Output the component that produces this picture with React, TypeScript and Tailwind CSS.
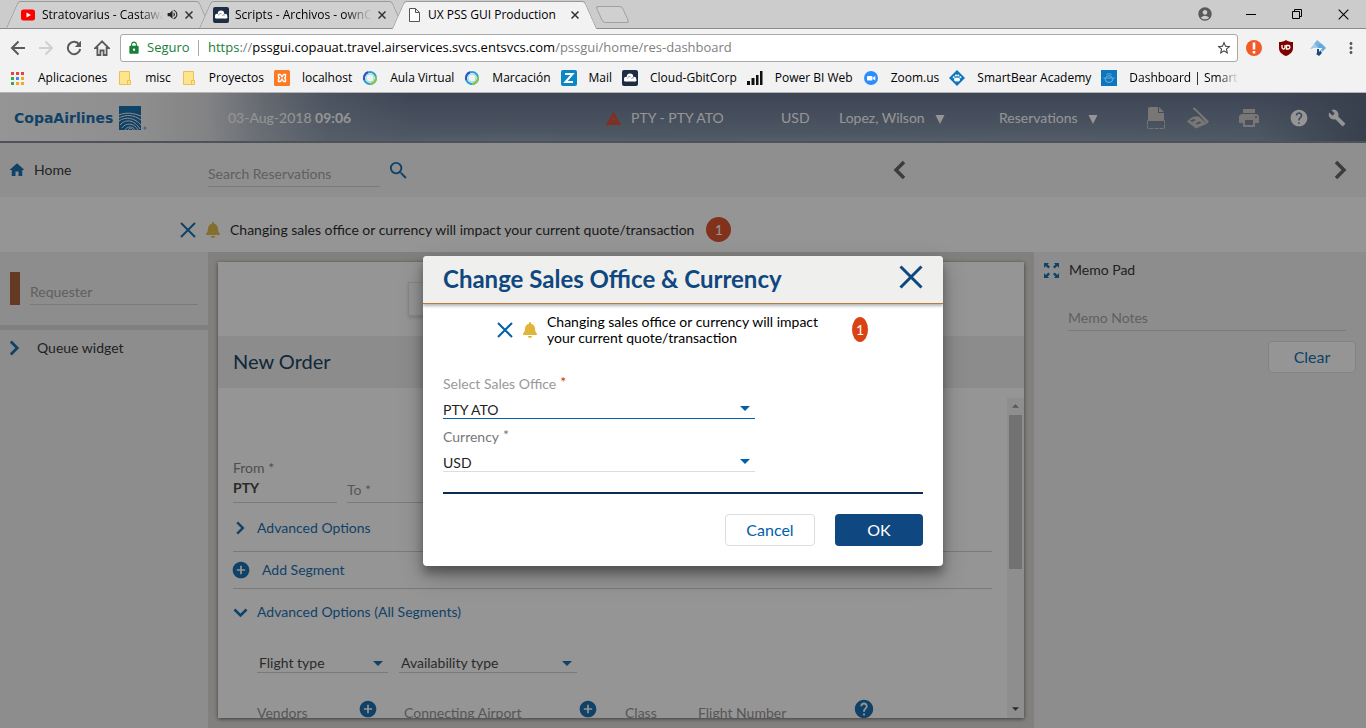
import type { ReactNode } from "react";
import { FaBell } from "react-icons/fa";
import {
  MdAccountCircle,
  MdAddCircle,
  MdBuild,
  MdHelp,
  MdHome,
  MdLock,
  MdMoreVert,
  MdPrint,
  MdSearch,
  MdStarBorder,
  MdVolumeUp,
  MdWarning,
} from "react-icons/md";

/* ---------- shared glyphs ---------- */

function Cross({ className, w = 2 }: { className: string; w?: number }) {
  return (
    <svg viewBox="0 0 16 16" className={className} fill="none" stroke="currentColor" strokeWidth={w} aria-hidden="true">
      <path d="M1 1L15 15M15 1L1 15" />
    </svg>
  );
}

function Chevron({ className, dir }: { className: string; dir: "left" | "right" | "down" }) {
  const d = { left: "M14 2L6 10L14 18", right: "M6 2L14 10L6 18", down: "M2 6L10 14L18 6" }[dir];
  return (
    <svg viewBox="0 0 20 20" className={className} fill="none" stroke="currentColor" strokeWidth="3.5" aria-hidden="true">
      <path d={d} />
    </svg>
  );
}

function Caret({ className }: { className: string }) {
  return (
    <svg viewBox="0 0 10 5" className={className} fill="currentColor" aria-hidden="true">
      <path d="M0 0H10L5 5Z" />
    </svg>
  );
}

function MenuTriangle() {
  return (
    <svg viewBox="0 0 10 9" className="mt-[2px] h-[9px] w-[10px]" fill="currentColor" aria-hidden="true">
      <path d="M.500 0H9.500L5 9Z" />
    </svg>
  );
}

function CloudLogo() {
  return (
    <svg viewBox="0 0 16 16" className="size-4 shrink-0" aria-hidden="true">
      <rect width="16" height="16" rx="2" fill="#1d2d44" />
      <g fill="#fff">
        <circle cx="8" cy="6.8" r="3.2" />
        <circle cx="4.2" cy="9" r="2.3" />
        <circle cx="12" cy="9" r="2.3" />
        <rect x="2" y="9" width="12.4" height="2.4" rx="1.2" />
      </g>
      <path d="M5.5 8.5a2 2 0 0 1 3-1.6M9.5 9a1.6 1.6 0 0 1 2.4-1" fill="none" stroke="#1d2d44" strokeWidth=".5" />
    </svg>
  );
}

/* ---------- browser frame ---------- */

function Tab({ icon, title, audio, active }: { icon: ReactNode; title: string; audio?: boolean; active?: boolean }) {
  const skin = active
    ? "z-10 h-7 before:bg-[#f2f2f2] after:bg-[#f2f2f2] -mb-px"
    : "h-[27px] before:bg-[#d0d0d0] after:bg-[#d0d0d0]";
  return (
    <div
      className={`relative -mr-3 w-[205px] before:absolute before:inset-y-0 before:left-[6px] before:right-1/2 before:-skew-x-[24deg] before:rounded-tl-[3px] before:border-t before:border-l before:border-[#999] after:absolute after:inset-y-0 after:left-1/3 after:right-[6px] after:skew-x-[24deg] after:rounded-tr-[3px] after:border-t after:border-r after:border-[#999] ${skin}`}
    >
      <div className="relative z-10 flex h-full items-center gap-[6px] pr-[18px] pl-[14px]">
        {icon}
        <span
          className={
            active
              ? "flex-1 overflow-hidden text-xs whitespace-nowrap text-black"
              : "flex-1 overflow-hidden text-xs whitespace-nowrap text-black [mask-image:linear-gradient(to_right,#000_80%,transparent)]"
          }
        >
          {title}
        </span>
        {audio && <MdVolumeUp className="-ml-1 size-[13px] shrink-0 text-[#222]" />}
        <button type="button" aria-label="Close tab" className="shrink-0 text-[#333]">
          <Cross className="size-2" w={3} />
        </button>
      </div>
    </div>
  );
}

function TabStrip() {
  return (
    <div className="flex h-[29px] items-end border-b border-[#8c8c8c] bg-[#ccc] pl-[6px]">
      <Tab
        audio
        title="Stratovarius - Castaway"
        icon={
          <svg viewBox="0 0 16 16" className="size-4 shrink-0" aria-hidden="true">
            <rect x="1" y="2.5" width="14" height="11" rx="2.5" fill="#f00" />
            <path d="M6.5 5.5v5L11 8z" fill="#fff" />
          </svg>
        }
      />
      <Tab title="Scripts - Archivos - ownCloud" icon={<CloudLogo />} />
      <Tab
        active
        title="UX PSS GUI Production"
        icon={
          <svg viewBox="0 0 16 16" className="size-4 shrink-0" fill="#fff" stroke="#555" aria-hidden="true">
            <path d="M3.500 1.500h6l4 4v9h-10zM9.500 1.500v4h4" />
          </svg>
        }
      />
      <button
        type="button"
        aria-label="New tab"
        className="mb-[5px] ml-[14px] h-[17px] w-[27px] skew-x-[24deg] rounded-[3px] border border-[#a0a0a0] bg-[#d0d0d0]"
      />
      <div className="mb-[6px] ml-auto flex items-center text-black">
        <button type="button" aria-label="Profile" className="w-[46px] text-[#5a5a5a]">
          <MdAccountCircle className="mx-auto size-4" />
        </button>
        <button type="button" aria-label="Minimize" className="w-[46px]">
          <svg viewBox="0 0 10 10" className="mx-auto size-[10px]" stroke="currentColor">
            <path d="M0 5.500H10" />
          </svg>
        </button>
        <button type="button" aria-label="Restore" className="w-[46px]">
          <svg viewBox="0 0 10 10" className="mx-auto size-[10px]" fill="none" stroke="currentColor">
            <path d="M.5 2.500h7v7h-7zM2.500 2.500v-2h7v7h-2" />
          </svg>
        </button>
        <button type="button" aria-label="Close" className="w-[46px]">
          <Cross className="mx-auto size-[11px]" w={1.6} />
        </button>
      </div>
    </div>
  );
}

function ArrowGlyph({ flip }: { flip?: boolean }) {
  return (
    <svg viewBox="0 0 16 16" className={flip ? "size-4 -scale-x-100 text-[#d0d0d0]" : "size-4 text-[#5a5a5a]"} fill="none" stroke="currentColor" strokeWidth="2">
      <path d="M15 8H2.500M8.500 1.500L2 8L8.500 14.500" />
    </svg>
  );
}

function Toolbar() {
  return (
    <div className="flex h-[34px] items-center bg-[#f2f2f2] pt-[3px] pr-2 pl-[10px]">
      <div className="flex w-[110px] shrink-0 items-center gap-3 text-[#5a5a5a]">
        <button type="button" aria-label="Back"><ArrowGlyph /></button>
        <button type="button" aria-label="Forward"><ArrowGlyph flip /></button>
        <button type="button" aria-label="Reload">
          <svg viewBox="0 0 16 16" className="size-4" fill="none" stroke="currentColor" strokeWidth="2">
            <path d="M13.200 4.500A6.200 6.200 0 1 0 14.200 9" />
            <path d="M15 .800V7H8.800z" fill="currentColor" stroke="none" />
          </svg>
        </button>
        <button type="button" aria-label="Home">
          <svg viewBox="0 0 16 16" className="size-4" fill="none" stroke="currentColor" strokeWidth="1.8">
            <path d="M8 1.300L1.300 8H3.400V15H6.400V10.500H9.600V15H12.600V8H14.700Z" />
          </svg>
        </button>
      </div>
      <div className="flex h-7 flex-1 items-center rounded-[3px] border border-[#a9a9a9] bg-white pr-[5px] pl-[6px]">
        <MdLock className="size-[14px] text-[#188038]" />
        <span className="ml-[6px] w-[51px] text-[13px] text-[#188038]">Seguro</span>
        <span className="mr-[9px] h-4 w-px bg-[#aaa]" />
        <span className="flex-1 text-[13px] text-[#808080]">
          <span className="text-[#188038]">https</span>://<span className="text-black">pssgui.copauat.travel.airservices.svcs.entsvcs.com</span>
          /pssgui/home/res-dashboard
        </span>
        <MdStarBorder className="size-4 text-[#444]" />
      </div>
      <div className="ml-2 flex items-center gap-4">
        <svg viewBox="0 0 16 16" className="size-4" aria-label="Alert extension">
          <circle cx="8" cy="8" r="8" fill="#f15a29" />
          <path d="M6.700 2.500h2.600v7H6.700zM6.700 11h2.600v2.400H6.700z" fill="#fff" />
        </svg>
        <svg viewBox="0 0 16 16" className="size-4" aria-label="Shield extension">
          <path d="M8 0c2 1.400 4.300 2 7 2v6c0 4-3 6.500-7 8C4 14.500 1 12 1 8V2c2.700 0 5-.600 7-2z" fill="#800000" />
          <path d="M4 5v2.500a1.500 1.500 0 0 0 3 0V5M8.500 9V5.500h1.700a1.700 1.700 0 0 1 0 3.500z" fill="none" stroke="#fff" strokeWidth="1.300" />
        </svg>
        <svg viewBox="0 0 16 16" className="size-4" aria-label="Cube extension">
          <path d="M7 0l5 4-4 4-4-4z" fill="#7db5e0" />
          <path d="M0 9l4-5 5 4-3 2V8z" fill="#a3cbea" />
          <path d="M8 4l4 0 4 4-4 4-1-3-3-1z" fill="#62a9dc" />
          <path d="M7 8h2l1 2 2 3-3 3-3-2 1-2z" fill="#134f86" />
          <path d="M3 8.500h9M6.500 9v4.500M9.500 9v2.500" stroke="#f2f2f2" fill="none" />
        </svg>
        <button type="button" aria-label="Menu" className="w-4 text-[#5a5a5a]"><MdMoreVert className="size-[18px]" /></button>
      </div>
    </div>
  );
}

const folder = (
  <svg viewBox="0 0 16 16" className="size-4" aria-hidden="true">
    <path d="M2.500 1.500h10v13h-10z" fill="#fee391" stroke="#e8c44f" />
    <path d="M10.500 10.500h3v4h-3z" fill="#fee391" stroke="#e8c44f" />
  </svg>
);

const ring = (
  <svg viewBox="0 0 16 16" className="size-4" fill="none" strokeWidth="2" aria-hidden="true">
    <circle cx="8" cy="8" r="6" stroke="#2a9fd0" />
    <path d="M8 14A6 6 0 0 0 13.800 6.500" stroke="#8cc63f" />
    <path d="M2.300 10A6 6 0 0 1 6 2.300" stroke="#2b55c9" />
    <circle cx="8" cy="8" r="4" stroke="#9be0d8" strokeWidth="1" />
  </svg>
);

const bookmarks: { label: string; icon: ReactNode }[] = [
  {
    label: "Aplicaciones",
    icon: (
      <svg viewBox="0 0 16 16" className="size-4" aria-hidden="true">
        <path d="M1 2h3v3H1zM6 2h3v3H6zM11 2h3v3h-3z" fill="#ea4335" />
        <path d="M1 7h3v3H1zM1 12h3v3H1z" fill="#34a853" />
        <path d="M6 7h3v3H6z" fill="#4285f4" />
        <path d="M11 7h3v3h-3zM6 12h3v3H6zM11 12h3v3h-3z" fill="#f5a623" />
      </svg>
    ),
  },
  { label: "misc", icon: folder },
  { label: "Proyectos", icon: folder },
  {
    label: "localhost",
    icon: (
      <svg viewBox="0 0 16 16" className="size-4" aria-hidden="true">
        <rect width="16" height="16" rx="1.500" fill="#fb7a24" />
        <path d="M4.500 4.500h2L8 7l1.500-2.500h2V7l-1 1 1 1v2.500h-2L8 9l-1.500 2.500h-2V9l1-1-1-1z" fill="none" stroke="#fff" strokeWidth="1.400" strokeLinejoin="round" />
      </svg>
    ),
  },
  { label: "Aula Virtual", icon: ring },
  { label: "Marcación", icon: ring },
  {
    label: "Mail",
    icon: (
      <svg viewBox="0 0 16 16" className="size-4" aria-hidden="true">
        <rect width="16" height="16" rx="2" fill="#0a87c4" />
        <path d="M4 4h7.500L4.500 12H12" fill="none" stroke="#fff" strokeWidth="2" />
      </svg>
    ),
  },
  { label: "Cloud-GbitCorp", icon: <CloudLogo /> },
  {
    label: "Power BI Web",
    icon: (
      <svg viewBox="0 0 16 16" className="size-4" aria-hidden="true">
        <path d="M0 11h3v4H0zM4.500 8h3v7h-3zM9 5h2.500v10H9zM13 1h2.500v14H13z" fill="#111" />
      </svg>
    ),
  },
  {
    label: "Zoom.us",
    icon: (
      <svg viewBox="0 0 16 16" className="size-4" aria-hidden="true">
        <circle cx="8" cy="8" r="7" fill="#2d8cff" />
        <rect x="4" y="6" width="5.500" height="4.500" rx="1" fill="#fff" />
        <path d="M10 7.500L12.300 6v4.500L10 9z" fill="#fff" />
      </svg>
    ),
  },
  {
    label: "SmartBear Academy",
    icon: (
      <svg viewBox="0 0 16 16" className="size-4" aria-hidden="true">
        <path d="M8 0l8 8-8 8-8-8z" fill="#0d76bd" />
        <ellipse cx="8" cy="9.500" rx="3" ry="2" fill="#fff" />
        <circle cx="4.700" cy="7.300" r="1" fill="#fff" />
        <circle cx="6.900" cy="5.500" r="1.100" fill="#fff" />
        <circle cx="9.300" cy="5.500" r="1.100" fill="#fff" />
        <circle cx="11.400" cy="7.300" r="1" fill="#fff" />
      </svg>
    ),
  },
  {
    label: "Dashboard | SmartBear",
    icon: (
      <svg viewBox="0 0 16 16" className="size-4" aria-hidden="true">
        <path d="M0 0h16v16H0z" fill="#0d76bd" />
        <path d="M2.500 8h11M4 8.500q0 4 4 4t4-4M5 7q3-3 6 0M5.500 5l1-1.500M8 4.500V3M10.500 5l-1-1.500" fill="none" stroke="#7fc0ea" strokeWidth=".8" />
      </svg>
    ),
  },
];

function BookmarksBar() {
  return (
    <nav aria-label="Bookmarks" className="flex h-[30px] items-center gap-[10px] overflow-hidden border-b border-[#b4b4b4] bg-[#f2f2f2] pl-[10px] text-xs text-black">
      {bookmarks.map((b, i) => (
        <a
          key={b.label}
          href="#"
          className={
            i === bookmarks.length - 1
              ? "flex w-[138px] shrink-0 items-center gap-3 overflow-hidden whitespace-nowrap [mask-image:linear-gradient(to_right,#000_85%,transparent)]"
              : "flex shrink-0 items-center gap-3 whitespace-nowrap"
          }
        >
          <span className="shrink-0">{b.icon}</span>
          {b.label}
        </a>
      ))}
    </nav>
  );
}

/* ---------- application ---------- */

function AppHeader() {
  return (
    <header className="flex h-[50px] items-center border-b-2 border-[#77808c] bg-[linear-gradient(to_right,#fff_0%,#f2f2f2_10%,#dcdddf_15%,rgba(190,196,205,0.75)_19%,rgba(150,162,180,0.4)_24%,transparent_30%),radial-gradient(ellipse_at_38%_110%,#8c9fb4_0%,transparent_18%),radial-gradient(ellipse_at_58%_120%,#8c9fb4_0%,transparent_22%),radial-gradient(ellipse_at_76%_110%,#8597ac_0%,transparent_20%),linear-gradient(to_right,transparent_92%,#4d5c76),linear-gradient(to_bottom,#586785,#7a8ca3)] pt-[2px] pr-5 pl-[14px] text-sm text-white">
      <div className="flex w-[214px] shrink-0 items-center text-[#0060a9]">
        <span className="w-[104px] font-['DejaVu_Sans'] text-[14px] font-bold">CopaAirlines</span>
        <svg viewBox="0 0 30 26" className="h-[26px] w-[30px]" aria-label="Copa Airlines globe">
          <path d="M1 1h22v24H1z" fill="currentColor" />
          <g fill="none" stroke="#eee" strokeWidth="1">
            <path d="M1 10c7-3 14-2 22 1M1 13c7-4 15-3 22 2M1 16c7-5 16-3 22 4" />
            <path d="M2 20c5-6 14-6 20 4M4 23c3-5 12-6 16 2M7 25c2-4 8-4 10 0M10 25c1-2 4-2 5 0" />
          </g>
          <circle cx="27" cy="23" r="1.500" fill="#7fa6c6" />
        </svg>
      </div>
      <time className="mr-auto">
        03-Aug-2018 <b>09:06</b>
      </time>
      <div className="flex w-[176px] items-center gap-[9px]">
        <MdWarning className="size-[17px] text-[#da3b20]" />
        PTY - PTY ATO
      </div>
      <span className="w-[58px]">USD</span>
      <button type="button" className="flex w-[160px] items-center gap-[10px]">
        Lopez, Wilson <MenuTriangle />
      </button>
      <button type="button" className="flex w-[148px] items-center gap-[10px]">
        Reservations <MenuTriangle />
      </button>
      <div className="flex items-center gap-7 text-[#c9c6c2]">
        <div className="flex items-center gap-[22px]">
          <svg viewBox="0 0 18 22" className="h-[22px] w-[18px]" fill="currentColor" aria-label="Document">
            <path d="M3 0h8v6h6v8H1V2q0-2 2-2z" />
            <path d="M12 0l5 5h-5z" />
            <path d="M.500 13.500v8h17v-8" fill="none" stroke="currentColor" strokeDasharray="4 1" />
          </svg>
          <svg viewBox="0 0 22 22" className="size-[22px]" fill="currentColor" aria-label="Scanner">
            <path d="M5.500 1.500L7.500 .500L22 14.500 19.500 17C16 11 11 6 5.500 1.500z" />
            <path d="M4 11L7 9.500h5L19.500 17 9 21.500 0 14.500z" />
            <path d="M3 13.500l4-1.500 2 1-4 2zM8.500 16.500l4-2 2 1-4 2z" fill="#6d7d97" />
          </svg>
        </div>
        <MdPrint className="size-6" />
        <div className="flex items-center gap-[19px] text-white">
          <MdHelp className="size-5" />
          <MdBuild className="size-[18px]" />
        </div>
      </div>
    </header>
  );
}

function SearchBar() {
  return (
    <div className="flex h-[54px] items-center bg-[#f3f3f3]">
      <a href="#" className="flex w-[208px] shrink-0 items-center gap-2 pl-2 text-sm text-[#222]">
        <MdHome className="size-[18px] text-[#0060a9]" />
        Home
      </a>
      <input
        aria-label="Search Reservations"
        placeholder="Search Reservations"
        className="mt-[7px] h-[26px] w-[172px] border-b border-[#ccc] text-sm placeholder:text-[#999]"
      />
      <button type="button" aria-label="Search" className="ml-[7px] text-[#0060a9]"><MdSearch className="size-[23px]" /></button>
      <div className="mr-4 ml-auto flex w-[460px] justify-between text-[#555]">
        <button type="button" aria-label="Previous"><Chevron dir="left" className="size-5" /></button>
        <button type="button" aria-label="Next"><Chevron dir="right" className="size-5" /></button>
      </div>
    </div>
  );
}

function NoticeBar() {
  return (
    <div className="flex h-[55px] items-center bg-white pt-[10px] pl-[180px] text-sm text-[#111]">
      <button type="button" aria-label="Dismiss" className="text-[#0060a9]"><Cross className="size-4" w={2} /></button>
      <FaBell className="ml-[9px] size-4 text-[#dfb63a]" />
      <span className="ml-[9px]">Changing sales office or currency will impact your current quote/transaction</span>
      <span className="ml-3 flex size-[25px] items-center justify-center rounded-full bg-[#da4214] text-white">1</span>
    </div>
  );
}

function LeftPanel() {
  return (
    <aside className="flex w-[208px] shrink-0 flex-col gap-[5px]">
      <div className="flex h-[73px] items-start gap-[10px] bg-[#f0f0f0] pt-5 pr-[10px] pl-[10px]">
        <span className="h-[33px] w-[10px] shrink-0 bg-[#a25128]" />
        <input
          aria-label="Requester"
          placeholder="Requester"
          className="mt-[7px] h-[26px] w-full min-w-0 border-b border-[#ccc] text-sm placeholder:text-[#999]"
        />
      </div>
      <div className="flex-1 bg-[#f0f0f0] pt-2">
        <button type="button" className="flex items-center gap-[15px] pl-[6px] text-sm text-[#222]">
          <Chevron dir="right" className="size-4 text-[#0060a9]" />
          Queue widget
        </button>
      </div>
    </aside>
  );
}

function PlainSelect({ id, label, width }: { id: string; label: string; width: string }) {
  return (
    <div className={`relative flex items-center ${width}`}>
      <select id={id} aria-label={label} className="h-5 w-full appearance-none border-b border-[#ccc] pl-[2px] text-sm text-[#333]">
        <option>{label}</option>
      </select>
      <Caret className="pointer-events-none absolute right-[5px] h-[5px] w-[10px] text-[#0060a9]" />
    </div>
  );
}

function OrderForm() {
  return (
    <div className="flex-1 pr-[15px] pl-[15px] text-sm">
      <div className="mt-[70px] flex items-end gap-[10px]">
        <div className="w-[104px] border-b border-[#ccc] pb-[5px]">
          <label htmlFor="from" className="block h-[21px] text-[#777]">From *</label>
          <input id="from" defaultValue="PTY" className="block h-[18px] w-full text-sm font-bold text-[#333]" />
        </div>
        <div className="w-[104px] border-b border-[#ccc] pb-[3px]">
          <input aria-label="To" placeholder="To *" className="block h-[19px] w-full placeholder:text-[#888]" />
        </div>
      </div>
      <button type="button" className="flex h-[49px] w-full items-center gap-[10px] border-b border-[#ccc] pt-[2px] text-[#0060a9]">
        <Chevron dir="right" className="size-[14px]" />
        Advanced Options
      </button>
      <button type="button" className="flex h-[37px] w-full items-center gap-[11px] border-b border-[#ccc] text-[#0060a9]">
        <MdAddCircle className="-ml-[2px] size-5" />
        Add Segment
      </button>
      <button type="button" className="flex h-[46px] w-full items-center gap-[9px] text-[#0060a9]">
        <Chevron dir="down" className="size-[15px]" />
        Advanced Options (All Segments)
      </button>
      <div className="mt-[18px] flex gap-[11px] pl-6">
        <PlainSelect id="flight-type" label="Flight type" width="w-[131px]" />
        <PlainSelect id="availability" label="Availability type" width="w-[178px]" />
      </div>
      <div className="mt-[22px] flex items-center pl-6 text-[#888]">
        <span className="w-[101px] pt-2">Vendors</span>
        <MdAddCircle className="size-5 text-[#0060a9]" />
        <span className="ml-[26px] w-[174px] pt-2">Connecting Airport</span>
        <MdAddCircle className="size-5 text-[#0060a9]" />
        <span className="ml-[27px] w-[73px] pt-2">Class</span>
        <span className="w-[155px] pt-2">Flight Number</span>
        <MdHelp className="size-[22px] text-[#0060a9]" />
      </div>
    </div>
  );
}

function OrderCard() {
  return (
    <main className="flex min-w-0 flex-1 bg-[#dbd7d3] p-[10px]">
      <section className="flex min-w-0 flex-1 flex-col overflow-hidden bg-white shadow-[0_1px_4px_rgba(0,0,0,0.6)]">
        <div className="h-[74px] shrink-0 pt-5">
          <div className="mx-auto h-[34px] w-[426px] border border-[#e4e4e4] shadow-[0_2px_3px_rgba(0,0,0,0.15)]" />
        </div>
        <h1 className="flex h-[52px] shrink-0 items-center bg-[#eee] pb-[2px] pl-[15px] text-xl text-[#002c50]">New Order</h1>
        <div className="flex min-h-0 flex-1 overflow-hidden">
          <OrderForm />
          <div className="mt-[10px] flex w-[17px] shrink-0 flex-col items-center bg-[#f1f1f1]">
            <Caret className="mt-[6px] h-1 w-[7px] rotate-180 text-[#888]" />
            <div className="mt-[7px] h-[154px] w-[13px] bg-[#bcbcbc]" />
            <Caret className="mt-auto mb-[7px] h-1 w-[7px] text-[#333]" />
          </div>
        </div>
      </section>
    </main>
  );
}

function MemoPanel() {
  return (
    <aside className="flex w-[332px] shrink-0 flex-col bg-[#f0f0f0] pt-2 pr-[10px] pl-[10px] text-sm">
      <div className="flex items-center gap-[10px] text-[#222]">
        <svg viewBox="0 0 15 15" className="size-[15px] text-[#0060a9]" fill="currentColor" aria-hidden="true">
          <path d="M0 0h5L3.600 1.400 6 3.800 4.300 5.500 1.800 3 0 5zM15 0v5l-1.800-2-2.500 2.500L9 3.800l2.400-2.400L10 0zM0 15v-5l1.800 2 2.500-2.500L6 11.200l-2.400 2.400L5 15zM15 15h-5l1.400-1.400L9 11.200l1.700-1.700 2.500 2.500 1.800-2z" />
        </svg>
        Memo Pad
      </div>
      <input
        aria-label="Memo Notes"
        placeholder="Memo Notes"
        className="mt-[25px] mr-[10px] ml-6 h-[26px] border-b border-[#ccc] placeholder:text-[#999]"
      />
      <button type="button" className="mt-[10px] h-8 w-[88px] self-end rounded border border-[#ddd] bg-white text-base text-[#0060a9]">
        Clear
      </button>
    </aside>
  );
}

function DialogSelect({ id, label, value, focused }: { id: string; label: string; value: string; focused?: boolean }) {
  return (
    <div className="flex h-[53px] w-[312px] flex-col">
      <label htmlFor={id} className={focused ? "flex h-5 items-center gap-1 text-[#999]" : "flex h-5 items-center gap-1 text-[#777]"}>
        {label}
        <span className={focused ? "pb-1 text-[#dd2c00]" : "pb-1"}>*</span>
      </label>
      <div className="relative mt-1 flex items-center">
        <select
          id={id}
          className={`h-[21px] w-full appearance-none border-b pt-[2px] text-sm text-[#222] ${focused ? "border-[#0060a9]" : "border-[#ddd]"}`}
        >
          <option>{value}</option>
        </select>
        <Caret className="pointer-events-none absolute right-[5px] h-[5px] w-[10px] text-[#0060a9]" />
      </div>
    </div>
  );
}

function SalesOfficeDialog() {
  return (
    <div
      role="dialog"
      aria-labelledby="dialog-title"
      className="flex w-[520px] flex-col overflow-hidden rounded bg-white pb-5 text-sm shadow-[0_7px_10px_rgba(0,0,0,0.3),0_10px_24px_rgba(0,0,0,0.25)]"
    >
      <div className="flex h-12 shrink-0 items-center justify-between border-b border-[#b97a3a] bg-[#efefed] pr-5 pl-5 shadow-[0_2px_3px_rgba(0,0,0,0.3)]">
        <h2 id="dialog-title" className="text-2xl font-bold text-[#0f4880]">Change Sales Office &amp; Currency</h2>
        <button type="button" aria-label="Close dialog" className="-mt-1 text-[#0f4880]"><Cross className="size-6" w={2} /></button>
      </div>
      <div className="flex items-center pt-[10px] pl-[74px]">
        <button type="button" aria-label="Dismiss" className="text-[#0060a9]"><Cross className="size-4" w={2} /></button>
        <FaBell className="ml-[9px] size-4 text-[#dfb63a]" />
        <p className="ml-[9px] w-[300px] leading-4 text-black">
          Changing sales office or currency will impact your current quote/transaction
        </p>
        <span className="ml-[5px] flex h-[25px] w-4 items-center justify-center rounded-[50%] bg-[#da4214] text-white">1</span>
      </div>
      <div className="mt-7 px-5">
        <DialogSelect id="office" label="Select Sales Office" value="PTY ATO" focused />
        <DialogSelect id="currency" label="Currency" value="USD" />
        <div className="mt-3 h-[2px] bg-[#0b2d52]" />
        <div className="mt-5 flex justify-end gap-5 text-base">
          <button type="button" className="h-8 w-[90px] rounded border border-[#ddd] bg-white text-[#0060a9]">Cancel</button>
          <button type="button" className="h-8 w-[88px] rounded bg-[#0f4880] text-white">OK</button>
        </div>
      </div>
    </div>
  );
}

export default function App() {
  return (
    <div className="flex h-screen min-w-[1280px] flex-col overflow-hidden font-['Open_Sans',sans-serif]">
      <TabStrip />
      <Toolbar />
      <BookmarksBar />
      <div className="relative flex min-h-0 flex-1 flex-col font-['Lato',sans-serif]">
        <AppHeader />
        <SearchBar />
        <NoticeBar />
        <div className="flex min-h-0 flex-1 bg-[#dbd7d3]">
          <LeftPanel />
          <OrderCard />
          <MemoPanel />
        </div>
        <div className="absolute inset-0 flex items-center justify-center bg-[#212121]/48">
          <SalesOfficeDialog />
        </div>
      </div>
    </div>
  );
}
